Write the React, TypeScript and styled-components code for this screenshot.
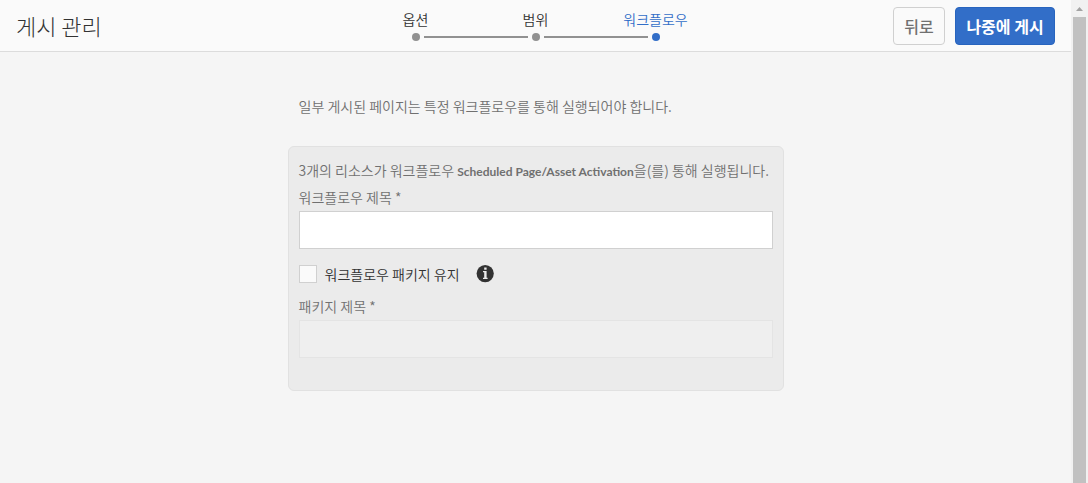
import React, { useState } from "react";
import styled, { createGlobalStyle } from "styled-components";

const GlobalStyle = createGlobalStyle`
  *, *::before, *::after { box-sizing: border-box; }
  html, body { margin: 0; background: #f5f5f5; }
  body, button, input {
    font-family: "Noto Sans CJK KR", "Noto Sans", sans-serif;
    font-size: 14px;
    font-weight: 350;
    line-height: 20px;
  }
  body { color: #707070; }
`;

const Frame = styled.div`
  display: flex;
  height: 100vh;
  overflow: hidden;
`;

const Page = styled.div`
  flex: 1;
  min-width: 0;
`;

const Header = styled.header`
  display: grid;
  grid-template-columns: 1fr auto 1fr;
  align-items: center;
  height: 52px;
  padding: 0 16px;
  background: #fafafa;
  border-bottom: 1px solid #dcdcdc;
`;

const Title = styled.h1`
  margin: 0;
  padding-bottom: 2px;
  color: #323232;
  font-size: 22px;
  line-height: 28px;
  font-weight: 300;
`;

const Steps = styled.ol`
  display: flex;
  margin: 0;
  padding: 0;
  list-style: none;
`;

const Step = styled.li<{ $active?: boolean }>`
  position: relative;
  display: flex;
  flex-direction: column;
  align-items: center;
  gap: 5px;
  width: 120px;
  color: ${(p) => (p.$active ? "#326ec8" : "#323232")};
  line-height: 18px;

  &:not(:last-child)::after {
    content: "";
    position: absolute;
    left: calc(50% + 8px);
    bottom: 3px;
    width: calc(100% - 16px);
    height: 2px;
    background: #919191;
  }
`;

const Dot = styled.span<{ $active?: boolean }>`
  width: 8px;
  height: 8px;
  border-radius: 50%;
  background: ${(p) => (p.$active ? "#326ec8" : "#919191")};
`;

const Actions = styled.div`
  display: flex;
  justify-content: flex-end;
  gap: 10px;
`;

const Button = styled.button<{ $primary?: boolean }>`
  height: 38px;
  min-width: ${(p) => (p.$primary ? "100px" : "52px")};
  padding: 0 10px;
  border: 1px solid ${(p) => (p.$primary ? "#2864be" : "#d0d0d0")};
  border-radius: 4px;
  background: ${(p) => (p.$primary ? "#326ec8" : "#fafafa")};
  color: ${(p) => (p.$primary ? "#fff" : "#707070")};
  font-size: 16px;
  font-weight: ${(p) => (p.$primary ? 700 : 500)};
  white-space: nowrap;
`;

const Main = styled.main`
  width: 100%;
  max-width: 496px;
  margin: 0 auto;
  padding-top: 44px;
`;

const Intro = styled.p`
  margin: 0 0 30px;
  padding: 0 11px;
`;

const Well = styled.section`
  display: flex;
  flex-direction: column;
  padding: 13px 10px 32px;
  border: 1px solid #e1e1e1;
  border-radius: 6px;
  background: #ebebeb;
`;

const Summary = styled.p`
  margin: 0 0 7px;
`;

const WorkflowName = styled.strong`
  font-family: Lato, "Noto Sans CJK KR", sans-serif;
  font-size: 12px;
  line-height: 1;
`;

const Field = styled.label`
  display: flex;
  flex-direction: column;
  gap: 4px;
`;

const TextInput = styled.input`
  width: 100%;
  height: 38px;
  padding: 0 10px;
  border: 1px solid #d0d0d0;
  border-radius: 0;
  background: #fff;
  color: #323232;

  &:disabled {
    border-color: #e4e4e4;
    background: #efefef;
  }
`;

const KeepRow = styled.div`
  display: flex;
  align-items: center;
  gap: 16px;
  margin: 15px 0 12px;
`;

const CheckLabel = styled.label`
  display: flex;
  align-items: center;
  gap: 8px;
  color: #323232;
`;

const Checkbox = styled.input`
  appearance: none;
  width: 18px;
  height: 18px;
  margin: 0;
  border: 1px solid #d0d0d0;
  background: #fafafa;

  &:checked { background: #326ec8; }
`;

const InfoIcon = () => (
  <svg width="18" height="18" viewBox="0 0 18 18" role="img" aria-label="정보">
    <circle cx="9.2" cy="8.6" r="8.6" fill="#323232" />
    <path d="M8.200 2.600h2.400v2.200H8.200zM7 6h3.600v6.800h1v1.200H7v-1.200h1.200V7.200H7z" fill="#ebebeb" />
  </svg>
);

const Scrollbar = styled.div`
  display: flex;
  flex-direction: column;
  align-items: center;
  width: 17px;
  background: #f1f1f1;
`;

const ScrollArrow = styled.svg`
  flex: none;
  width: 17px;
  height: 17px;
`;

const Thumb = styled.div`
  flex: 1;
  width: 13px;
  background: #c1c1c1;
`;

const steps = ["옵션", "범위", "워크플로우"];

export default function App() {
  const [title, setTitle] = useState("");
  const [keep, setKeep] = useState(false);
  const [packageTitle, setPackageTitle] = useState("");

  return (
    <Frame>
      <GlobalStyle />
      <Page>
        <Header>
          <Title>게시 관리</Title>
          <Steps>
            {steps.map((name, i) => {
              const active = i === steps.length - 1;
              return (
                <Step key={name} $active={active} aria-current={active ? "step" : undefined}>
                  {name}
                  <Dot $active={active} />
                </Step>
              );
            })}
          </Steps>
          <Actions>
            <Button type="button">뒤로</Button>
            <Button type="button" $primary>나중에 게시</Button>
          </Actions>
        </Header>
        <Main>
          <Intro>일부 게시된 페이지는 특정 워크플로우를 통해 실행되어야 합니다.</Intro>
          <Well>
            <Summary>
              3개의 리소스가 워크플로우 <WorkflowName>Scheduled Page/Asset Activation</WorkflowName>을(를) 통해 실행됩니다.
            </Summary>
            <Field>
              워크플로우 제목 *
              <TextInput value={title} onChange={(e) => setTitle(e.target.value)} />
            </Field>
            <KeepRow>
              <CheckLabel>
                <Checkbox type="checkbox" checked={keep} onChange={(e) => setKeep(e.target.checked)} />
                워크플로우 패키지 유지
              </CheckLabel>
              <InfoIcon />
            </KeepRow>
            <Field>
              패키지 제목 *
              <TextInput
                disabled={!keep}
                value={packageTitle}
                onChange={(e) => setPackageTitle(e.target.value)}
              />
            </Field>
          </Well>
        </Main>
      </Page>
      <Scrollbar aria-hidden="true">
        <ScrollArrow viewBox="0 0 17 17">
          <path d="M5 11l3.500-4 3.500 4z" fill="#a3a3a3" />
        </ScrollArrow>
        <Thumb />
      </Scrollbar>
    </Frame>
  );
}
